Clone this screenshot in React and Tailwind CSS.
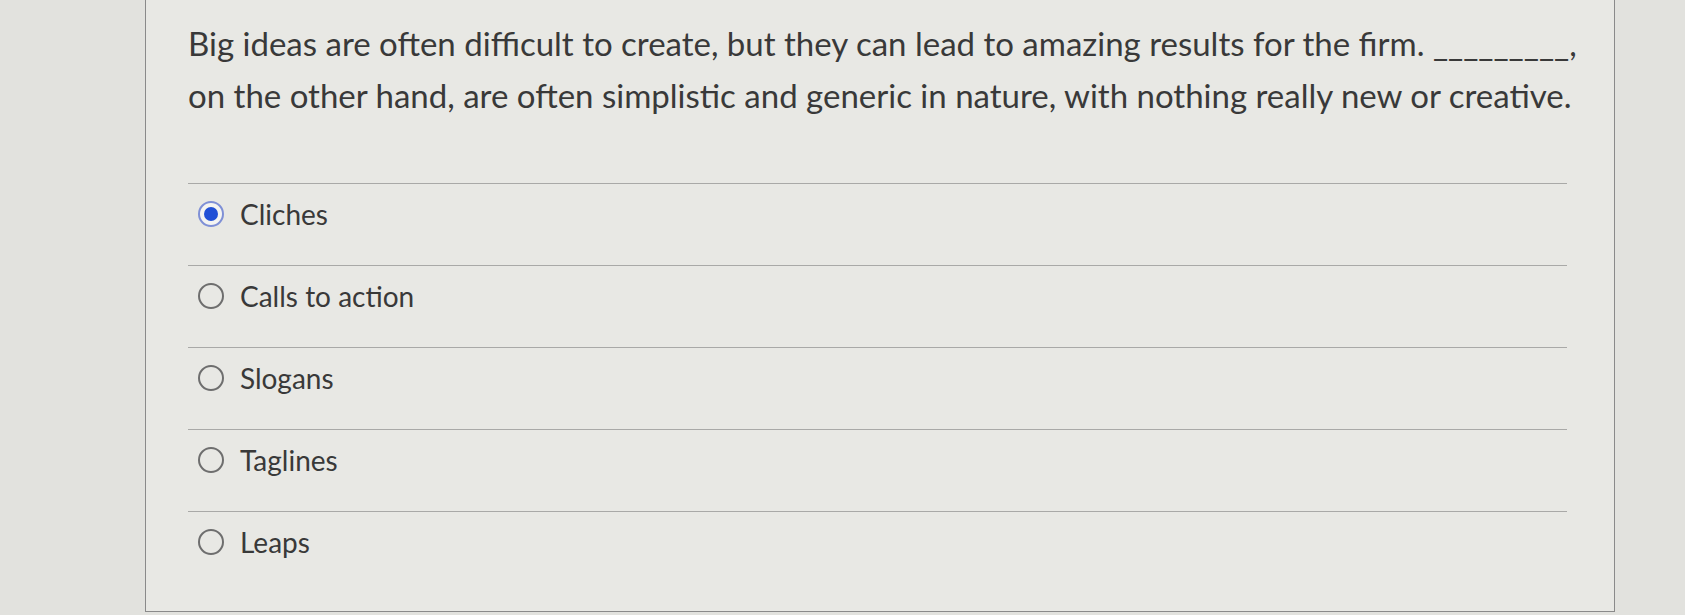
const options = [
  { id: 'cliches', label: 'Cliches' },
  { id: 'calls', label: 'Calls to action' },
  { id: 'slogans', label: 'Slogans' },
  { id: 'taglines', label: 'Taglines' },
  { id: 'leaps', label: 'Leaps' },
];

function Radio({ checked }) {
  if (checked) {
    return (
      <span className="flex h-[26px] w-[26px] shrink-0 items-center justify-center rounded-full border-[2px] border-[#7f90d6] bg-[#f4f4f2]">
        <span className="h-[14px] w-[14px] rounded-full bg-[#2150d6]" />
      </span>
    );
  }
  return <span className="h-[26px] w-[26px] shrink-0 rounded-full border-[2px] border-[#6e6e6e]" />;
}

export default function App() {
  const selected = 'cliches';

  return (
    <div className="h-[615px] w-[1685px] overflow-hidden bg-[#e2e2de] font-['Lato','Noto_Sans',sans-serif] text-[#393939]">
      <div className="ml-[145px] h-[612px] w-[1470px] border-x border-b border-[#8a8a8a] bg-[#e8e8e4] pl-[42px] pr-[47px]">
        <p className="whitespace-nowrap pt-[17px] text-[33px] leading-[52px]">
          Big ideas are often difficult to create, but they can lead to amazing results for the firm. _________,
          <br />
          on the other hand, are often simplistic and generic in nature, with nothing really new or creative.
        </p>

        <div className="mt-[62px]">
          {options.map((opt) => (
            <label
              key={opt.id}
              className="flex h-[82px] items-start gap-[16px] border-t border-[#a9a9a7] pl-[10px] pt-[16px]"
            >
              <span className="flex h-[28px] items-center">
                <Radio checked={opt.id === selected} />
              </span>
              <span className="text-[28px] leading-[28px]">{opt.label}</span>
            </label>
          ))}
        </div>
      </div>
    </div>
  );
}
